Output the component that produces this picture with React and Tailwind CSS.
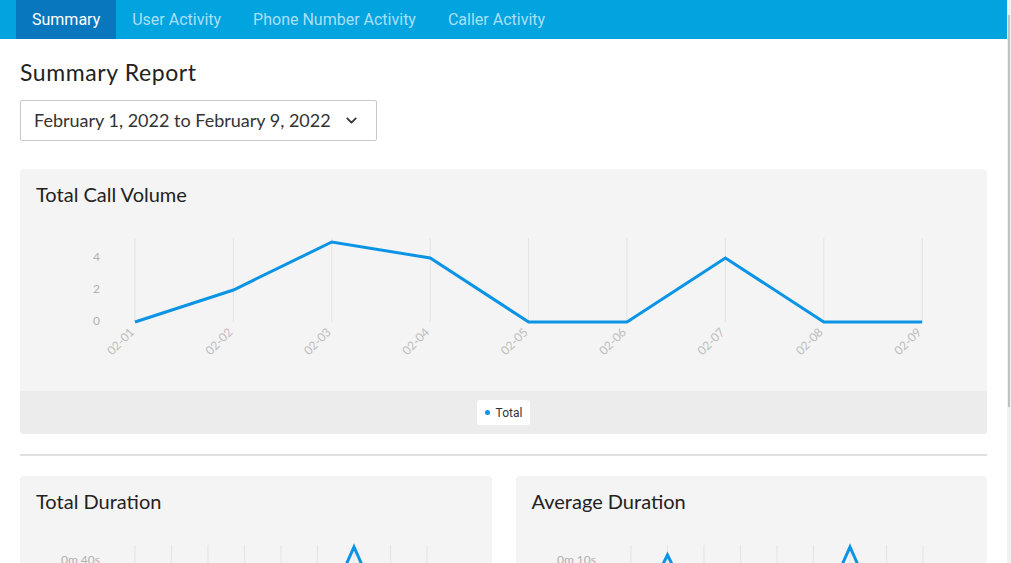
import { ChevronDown } from "lucide-react";

const tabs = ["Summary", "User Activity", "Phone Number Activity", "Caller Activity"];
const days = ["02-01", "02-02", "02-03", "02-04", "02-05", "02-06", "02-07", "02-08", "02-09"];

const LineChart = ({ step, points, yLabels }) => {
	const xs = days.map((_, i) => 115 + step * i);
	return (
		<svg width="100%" height="182" className="block">
			{xs.map((x) => (
				<line key={x} x1={x} x2={x} y1={29} y2={113} stroke="#e3e3e3" strokeWidth="1" />
			))}
			{yLabels.map((l) => (
				<text key={l.t} x={80} y={l.y + 4} textAnchor="end" fontSize="12" fill="#b0b0b0">
					{l.t}
				</text>
			))}
			<polyline
				points={points.map((y, i) => `${xs[i]},${y}`).join(" ")}
				fill="none"
				stroke="#0b94e6"
				strokeWidth="3"
				strokeLinejoin="miter"
			/>
			{xs.map((x, i) => (
				<text
					key={days[i]}
					x={x}
					y={124}
					textAnchor="end"
					fontSize="12"
					fill="#bdbdbd"
					transform={`rotate(-45 ${x} 124)`}
				>
					{days[i]}
				</text>
			))}
		</svg>
	);
};

const Card = ({ title, children }) => (
	<div className="bg-[#f4f4f4] rounded-[4px] overflow-hidden">
		<div className="px-4 pt-[14px] text-[20px] leading-[22px] text-[#222]">{title}</div>
		<div className="mt-[4px]">{children}</div>
		<div className="bg-[#ececec] h-[43px] flex items-center justify-center">
			<div className="bg-white rounded-[3px] h-[25px] px-[8px] flex items-center gap-[6px] font-['Roboto'] text-[12px] text-[#333]">
				<span className="w-[5px] h-[5px] rounded-full bg-[#0b94e6]" />
				Total
			</div>
		</div>
	</div>
);

const App = () => {
	const v = (n) => 113 - n * 16;
	return (
		<div className="h-screen overflow-hidden flex bg-white font-['Lato',sans-serif]">
			<div className="flex-1 min-w-0">
				<nav className="h-[39px] bg-[#02a4e0] flex pl-4 font-['Roboto',sans-serif] text-[16px]">
					{tabs.map((t, i) => (
						<div
							key={t}
							className={
								i === 0
									? "px-4 flex items-center bg-[#0977bd] text-white"
									: "px-4 flex items-center text-[#abdff7]"
							}
						>
							{t}
						</div>
					))}
				</nav>
				<div className="px-5 pt-[21px]">
					<h1 className="text-[23px] leading-[24px] tracking-[0.6px] text-[#222]">Summary Report</h1>
					<button className="mt-[16px] h-[41px] w-[357px] border border-[#c8c8c8] rounded-[2px] bg-white flex items-center pl-[13px] gap-[12px] text-[18px] text-[#333]">
						February 1, 2022 to February 9, 2022
						<ChevronDown size={17} strokeWidth={2.5} className="text-[#3a3430]" />
					</button>
					<div className="mt-[28px]">
						<Card title="Total Call Volume">
							<LineChart
								step={98.4}
								points={[0, 2, 5, 4, 0, 0, 4, 0, 0].map(v)}
								yLabels={[
									{ t: "4", y: 48 },
									{ t: "2", y: 80 },
									{ t: "0", y: 112 },
								]}
							/>
						</Card>
					</div>
					<div className="my-5 h-[2px] bg-[#e0e0e0]" />
					<div className="grid grid-cols-2 gap-6">
						<Card title="Total Duration">
							<LineChart
								step={36.5}
								points={[113, 113, 113, 113, 113, 113, 31, 113, 113]}
								yLabels={[{ t: "0m 40s", y: 44 }]}
							/>
						</Card>
						<Card title="Average Duration">
							<LineChart
								step={36.5}
								points={[113, 39, 113, 113, 113, 113, 31, 113, 113]}
								yLabels={[{ t: "0m 10s", y: 44 }]}
							/>
						</Card>
					</div>
				</div>
			</div>
			<div className="w-[4px] bg-[#f1f1f1]">
				<div className="mt-[15px] ml-[1px] w-[2px] h-[392px] bg-[#c1c1c1]" />
			</div>
		</div>
	);
};

export default App;
